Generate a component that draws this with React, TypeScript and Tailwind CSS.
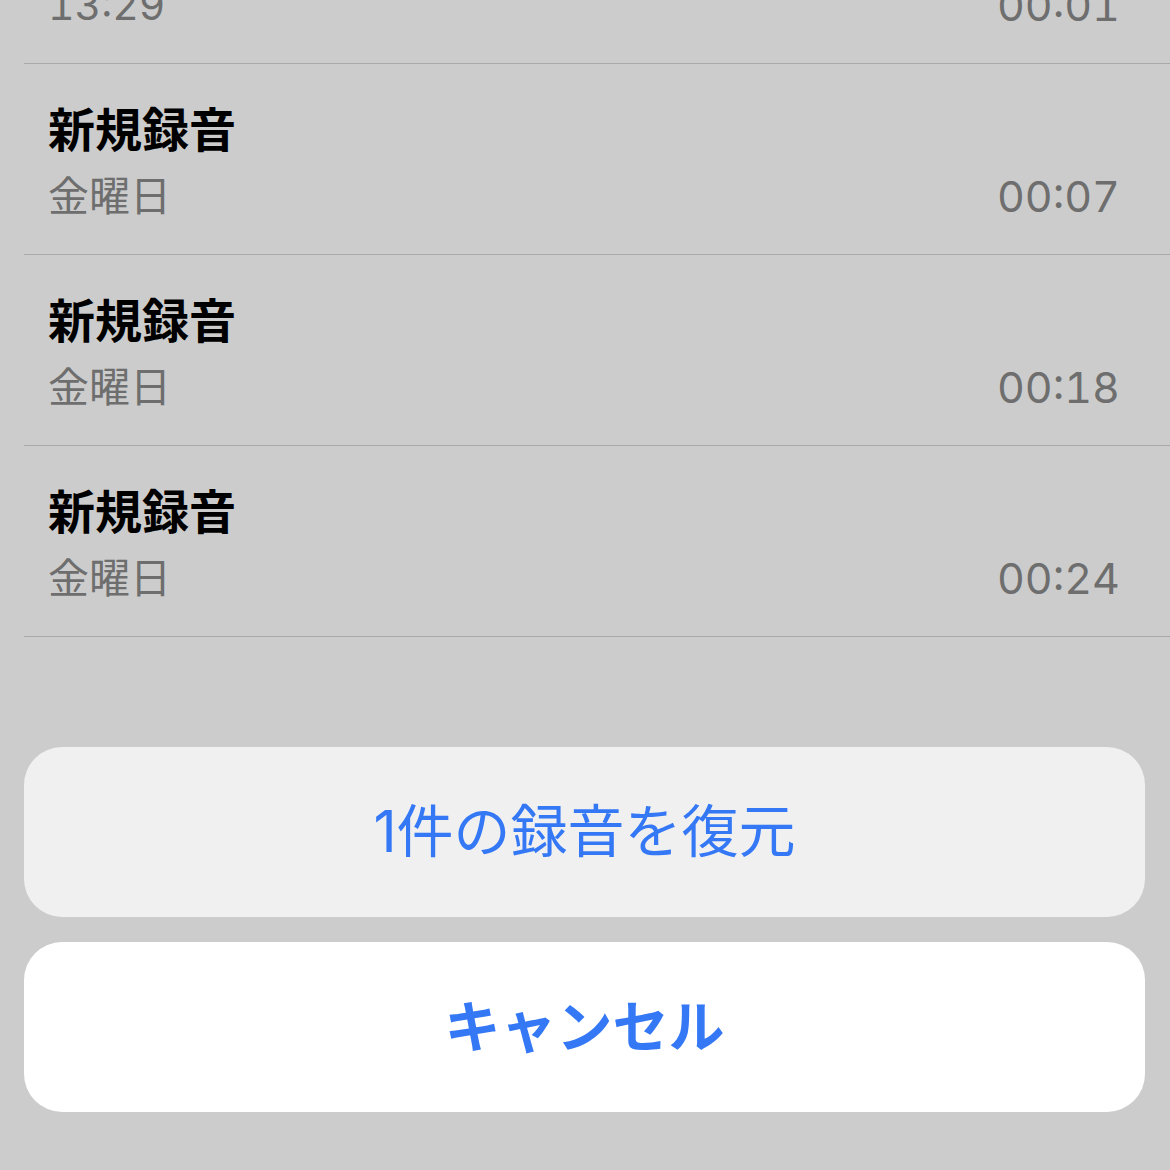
import React from 'react';

const rows = [
  { title: '新規録音', date: '13:29', time: '00:01' },
  { title: '新規録音', date: '金曜日', time: '00:07' },
  { title: '新規録音', date: '金曜日', time: '00:18' },
  { title: '新規録音', date: '金曜日', time: '00:24' },
];

const font = "font-['Inter','Noto_Sans_CJK_JP',sans-serif]";

const App: React.FC = () => {
  return (
    <div className={`w-[1170px] h-[1170px] overflow-hidden bg-[#cccccc] ${font}`}>
      {/* Recordings list, first row scrolled partly out of view */}
      <div className="-mt-[127px] ml-[24px]">
        {rows.map((r, i) => (
          <div key={i} className="h-[191px] border-b border-[#a9a9a9] pl-[24px] pr-[50px] pt-[38px]">
            <div className="text-[47px] leading-[56px] font-bold text-black">{r.title}</div>
            <div className="mt-[13px] flex items-center justify-between text-[#6e6e6e] leading-[50px]">
              <span className="text-[41px] tabular-nums">{r.date}</span>
              <span className="text-[43px] tabular-nums">{r.time}</span>
            </div>
          </div>
        ))}
      </div>

      {/* Action sheet */}
      <div className="mt-[110px] ml-[24px] mr-[25px] flex flex-col gap-[25px]">
        <button className="h-[170px] rounded-[38px] bg-[#f0f0f0] text-[#3478f6] text-[57px] flex items-center justify-center">
          1件の録音を復元
        </button>
        <button className="h-[170px] rounded-[38px] bg-white text-[#3478f6] text-[56px] font-bold flex items-center justify-center">
          キャンセル
        </button>
      </div>
    </div>
  );
};

export default App;
